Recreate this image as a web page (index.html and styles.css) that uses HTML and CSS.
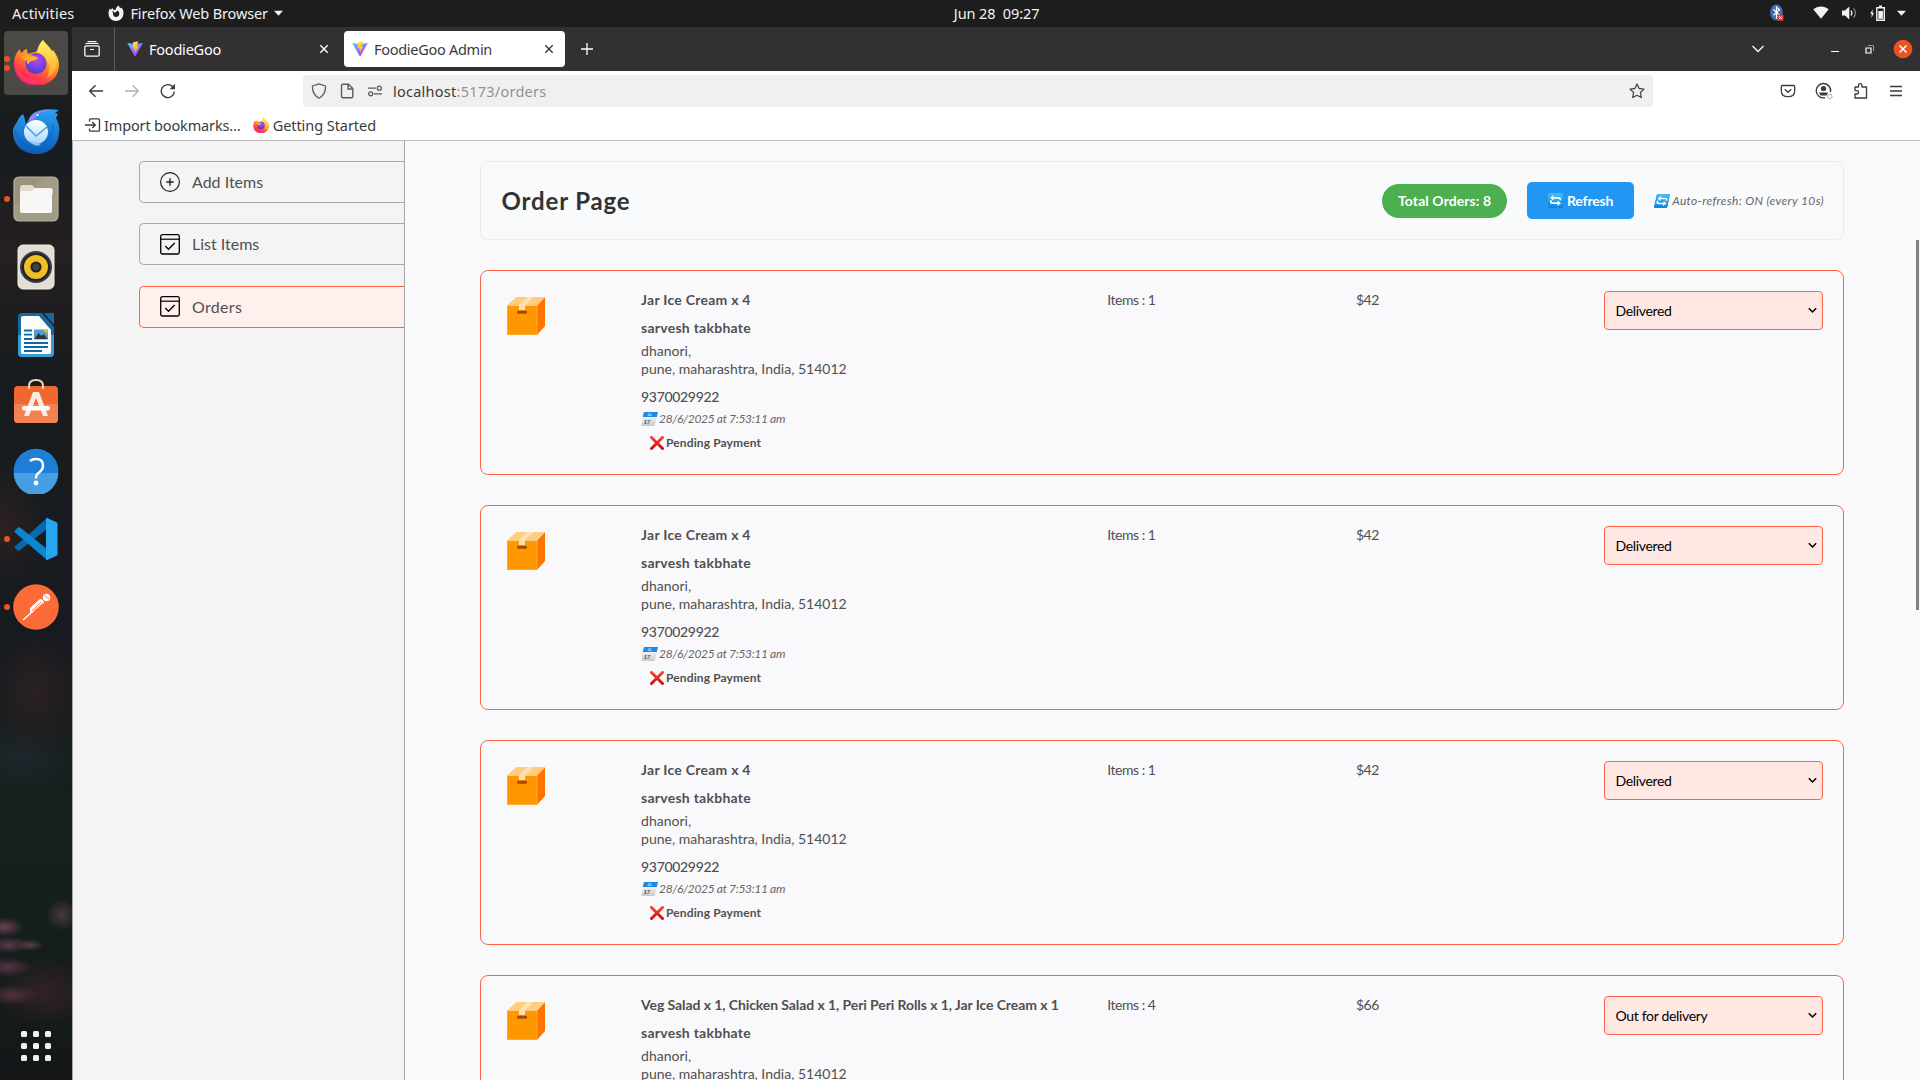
FILE: index.html
```html
<!DOCTYPE html>
<html lang="en">
<head>
<meta charset="utf-8">
<title>FoodieGoo Admin</title>
<link rel="stylesheet" href="styles.css">
</head>
<body>
<svg class="defs" aria-hidden="true">
  <defs>
    <linearGradient id="ffBody" x1="0.8" y1="0" x2="0.3" y2="1"><stop offset="0" stop-color="#fff04a"/><stop offset=".3" stop-color="#ffbd2e"/><stop offset=".55" stop-color="#ff7a2a"/><stop offset=".8" stop-color="#ff3350"/><stop offset="1" stop-color="#e3128a"/></linearGradient>
    <linearGradient id="ffEar" x1="0" y1="0" x2="0" y2="1"><stop offset="0" stop-color="#fff36a"/><stop offset="1" stop-color="#ffa32a"/></linearGradient>
    <radialGradient id="ffGlobe" cx=".55" cy=".35" r=".7"><stop offset="0" stop-color="#b14be8"/><stop offset=".6" stop-color="#7340e0"/><stop offset="1" stop-color="#4b3cc4"/></radialGradient>
    <linearGradient id="ffFace" x1="0" y1="0" x2="1" y2="1"><stop offset="0" stop-color="#ff9a1e"/><stop offset="1" stop-color="#ffbe38"/></linearGradient>
    <linearGradient id="viteBody" x1="0" y1="0" x2=".6" y2="1"><stop offset="0" stop-color="#41d1ff"/><stop offset="1" stop-color="#bd34fe"/></linearGradient>
    <linearGradient id="viteBolt" x1=".4" y1="0" x2=".6" y2="1"><stop offset="0" stop-color="#ffdf4f"/><stop offset="1" stop-color="#ffa800"/></linearGradient>
    <linearGradient id="tb" x1="0" y1="0" x2="0" y2="1"><stop offset="0" stop-color="#2aa0f4"/><stop offset="1" stop-color="#0b5bb5"/></linearGradient>
    <linearGradient id="tbMail" x1="0" y1="0" x2="0" y2="1"><stop offset="0" stop-color="#fff"/><stop offset="1" stop-color="#a8d6fb"/></linearGradient>
    <linearGradient id="syncBg" x1="0" y1="0" x2="0" y2="1"><stop offset="0" stop-color="#43bdf8"/><stop offset="1" stop-color="#0b86dd"/></linearGradient>
    <linearGradient id="calPage" x1="0" y1="0" x2="0" y2="1"><stop offset="0" stop-color="#f6f6f6"/><stop offset="1" stop-color="#c9c9c9"/></linearGradient>
    <linearGradient id="crossRed" x1="0" y1="0" x2="0" y2="1"><stop offset="0" stop-color="#f2423a"/><stop offset="1" stop-color="#cf1111"/></linearGradient>
  </defs>
  <symbol id="firefox" viewBox="0 0 46 46">
    <path fill="url(#ffBody)" d="M1 25C1 19 3 14 6 11l.4-1 2 4c1.500-1.400 3-3 5-4.300L15 15c3-1 5-2 8-2l3-4c1-3 2-6 4-8 2 3 5 5 7 8l2 3 1-1c4 5 6 10 6 15 0 12-10 21-23 21S1 38 1 25z"/>
    <path fill="url(#ffEar)" d="M24 13c1-6 3-9 6-12 1 4 5 6 7 9l2 4 1-2c3 6 4 10 3 15-1 6-5 11-10 13 4-6 4-12 2-17-2-4-6-8-11-10z"/>
    <circle cx="23" cy="24.500" r="10.500" fill="url(#ffGlobe)"/>
    <path fill="url(#ffFace)" d="M7 18c3-2 7-2 10-2 3 0 5 2 8 2-1 3-3 3.500-6 4-2 .4-3 1.500-3.500 3.500-1.500-1-2-2.500-1.500-4-3-.5-5-1.500-7-3.500z"/>
    <path fill="#ff4a4c" opacity=".55" d="M2 22c3 9 7 16 16 18 8 2 15 0 20-5-4 7-9 10-16 10C10 45 2 37 2 22z"/>
  </symbol>
  <symbol id="vite" viewBox="0 0 32 32">
    <path fill="url(#viteBody)" d="M31 5 16.800 30.500a.8.8 0 0 1-1.400 0L1 5a.8.8 0 0 1 .9-1.200L16 6.300 30 3.800A.8.800 0 0 1 31 5z"/>
    <path fill="url(#viteBolt)" d="m22.500.5-10.500 2-.7 11.500 3.500-.6-1 5 3-.9-1.500 7.500 7.500-14-3.200.6z"/>
  </symbol>
  <symbol id="x" viewBox="0 0 16 16"><path d="m4.300 4.300 7.400 7.400m0-7.400-7.400 7.400" fill="none" stroke="currentColor" stroke-width="1.400"/></symbol>
  <symbol id="check-box" viewBox="0 0 20 21">
    <rect x=".7" y=".7" width="18.600" height="19.300" rx="1.700" fill="none" stroke="#000" stroke-width="1.300"/>
    <path d="M.7 5.200h18.600" stroke="#000" stroke-width="1.200"/><path d="m5.300 12 3.200 3.300L14.700 9" fill="none" stroke="#000" stroke-width="1.300"/>
  </symbol>
  <symbol id="parcel" viewBox="0 0 38 38">
    <path fill="#ff9800" d="M0 8.500h30V38H0z"/><path fill="#ff7300" d="M30 8.500 38 0v29l-8 9z"/>
    <path fill="#ffcc80" d="M0 8.500 9.500 0H38l-8 8.500z"/><path fill="#ffe0b2" d="M12 8.500 20 0h6.500L18 8.500V13h-6z"/>
    <rect x="10" y="13.700" width="10" height="3" rx="1.200" fill="#a84a05"/><path d="M.4 8.500V37.600h29.600V8.500" fill="none" stroke="#ffb142" stroke-width=".8"/>
  </symbol>
  <symbol id="cross" viewBox="0 0 14 14"><path d="m1.500 1.500 11 11m0-11-11 11" stroke="url(#crossRed)" stroke-width="2.900" stroke-linecap="square" fill="none"/></symbol>
  <symbol id="sync" viewBox="0 0 15 15">
    <rect width="15" height="15" rx="1.500" fill="url(#syncBg)"/>
    <path d="M12.200 7.300V6.300Q12.200 4.800 10.700 4.800H4.500M2.800 7.300v1.400q0 1.500 1.500 1.500h6.200" fill="none" stroke="#fff" stroke-width="1.700"/><path d="M5.500 2v5.400L2.200 4.700zM9.500 7.600V13l3.500-2.700z" fill="#fff"/>
  </symbol>
</svg>

<header class="topbar">
  <span class="activities">Activities</span>
  <svg class="app-glyph" viewBox="0 0 16 16"><path fill="#f2f2f2" fill-rule="evenodd" d="M.5 8.500C.5 6 1.300 4.500 2 3.500l.8 1.200L4.500 3l.7 1.800L7.500 5C8 3 9 1.300 10.500.3c.3 1.500 1.300 2 2.300 3l.8-.5C15 4.500 15.700 6.500 15.500 8.500 15.300 13 12 16 8 16S.5 13 .5 8.500zM6 6.500 3.800 6.300C5 7 5 8 5 9c.3 2 1.500 3 3 3 2 0 3.300-1.500 3.300-3.300C11.300 7 10.500 6 9 5.500 8.600 7 7.500 7.500 6.500 8z"/></svg>
  <span class="app-name">Firefox Web Browser</span>
  <svg class="caret" viewBox="0 0 10 6"><path d="M0 .5h10L5 6z" fill="#f2f2f2"/></svg>
  <time class="clock">Jun 28&nbsp; 09:27</time>
  <div class="tray">
    <svg width="16" height="18" viewBox="0 0 16 18"><ellipse cx="6.500" cy="8.500" rx="6.300" ry="8" fill="#3d6fb0"/><path d="m3.500 5.500 6 5.500-3 2.800V3l3 2.700-6 5.500" fill="none" stroke="#fff" stroke-width="1.200"/><rect x="7.300" y="10.500" width="6.300" height="6.300" rx="1" fill="#e0323c"/><path d="m9 12.200 2.900 2.900m0-2.900L9 15.100" stroke="#fff"/></svg>
    <svg class="wifi" width="16" height="13" viewBox="0 0 16 13"><path d="M.3 3.300C4.500-.6 11.500-.6 15.700 3.300L8 12.800z" fill="#f2f2f2"/></svg>
    <svg class="vol" width="15" height="14" viewBox="0 0 15 14"><path d="M0 4.500h3L7.300.5v13L3 9.500H0z" fill="#f2f2f2"/><path d="M9 4.500c1 1.500 1 3.500 0 5" fill="none" stroke="#f2f2f2" stroke-width="1.300"/><path d="M11.500 2.300c2.200 2.800 2.200 6.600 0 9.400" fill="none" stroke="#8a8a8a" stroke-width="1.200"/></svg>
    <svg class="bat" width="16" height="16" viewBox="0 0 16 16"><path d="M2.800 4 .3 8.800h1.500L1.300 13 4 7.700H2.300z" fill="#f2f2f2"/><path d="M6.800 2.700h7.500v12.500H6.800zM9 1.300h3" fill="none" stroke="#f2f2f2" stroke-width="1.400"/><path d="M8.300 6h4.600v7.800H8.300z" fill="#f2f2f2"/></svg>
    <svg class="caret" viewBox="0 0 10 6"><path d="M0 .5h10L5 6z" fill="#f2f2f2"/></svg>
  </div>
</header>

<div class="desktop">
  <nav class="dock">
    <div class="app app-active"><i class="dots"><b></b><b></b></i><svg class="icon-ff" width="46" height="46"><use href="#firefox"/></svg></div>
    <div class="app"><svg class="icon-tb" width="48" height="48" viewBox="0 0 48 48">
      <path fill="url(#tb)" d="M1 24c0-5 2-7 4-10 1-3 3-6 6-8 2 4 2 7 3 10l4-7c4-7 15-9 29-7l-4 3 3 1-2 4c3 5 4 10 3 16-1 12-10 20-22 20C11 46 1 37 1 24z"/>
      <path fill="#8f86e8" d="M17 11c3-7 12-9 21-9-7 2-12 3-14 7l-5 7z"/><circle cx="25.500" cy="7" r="1" fill="#fff"/>
      <circle cx="24" cy="24" r="12" fill="url(#tbMail)"/><path d="m14 18 10 10 11-9" fill="none" stroke="#4b9fe6" stroke-width="1.600"/><path d="M17 33c3 4 7 5 12 5-1-1-2-2-2-3" fill="#8ac6f8"/>
      <path d="M3 23c3 9 8 15 18 16 10 0 20-7 20-22" fill="none" stroke="#0c62c4" stroke-width="2" opacity=".5"/></svg></div>
    <div class="app"><i class="dots"><b></b></i><svg width="46" height="46" viewBox="0 0 46 46"><rect x="1" y="1" width="44" height="44" rx="5" fill="#9a927d" stroke="#b9b3a1" stroke-width="1.200"/><path d="M2 30 30 2h10q4 0 4 4v34q0 4-4 4H6q-4 0-4-4z" fill="#a8a18c" opacity=".6"/><path d="M7 12q0-3 3-3h9l3 3h15q3 0 3 3v3H7z" fill="#dedbd0"/><path d="M7 17q0-2 2-2h10l3-2.700h15q2 0 2 2V35q0 2-2 2H9q-2 0-2-2z" fill="#f8f7f5"/></svg></div>
    <div class="app"><svg width="38" height="46" viewBox="0 0 38 46"><rect x="1" y="1" width="36" height="44" rx="5" fill="#e2ded3" stroke="#f0ede6"/><circle cx="19" cy="23" r="16" fill="#3a3a48"/><circle cx="19" cy="23" r="14" fill="#20212e"/><circle cx="19" cy="23" r="12" fill="#f0c020"/><circle cx="19" cy="23" r="5.600" fill="#26211c"/><circle cx="19" cy="23" r="3.500" fill="#414141"/></svg></div>
    <div class="app"><svg width="38" height="46" viewBox="0 0 38 46"><path fill="#15699f" d="M5 1h20l12 14v26q0 4-4 4H5q-4 0-4-4V5q0-4 4-4z"/><path fill="#3b9cd1" d="M1 23h36v18q0 4-4 4H5q-4 0-4-4z"/><path fill="#15699f" d="M27 1h10v12z"/><path fill="#fbfbfb" d="M6 4h16l12 14v22q0 2-2 2H6q-2 0-2-2V6q0-2 2-2z"/><path d="M7 18.500h8M7 22.700h8M7 27h8M7 31h24M7 35h24M7 39h18" stroke="#0e6ca5" stroke-width="1.800"/><rect x="17" y="17.500" width="14" height="10" fill="#4d9fd2"/><path d="m17.500 27 4-6 3 3 2-2 4 5z" fill="#333"/><path d="M26 18h4.500v4z" fill="#f4c12c"/></svg></div>
    <div class="app"><svg class="icon-store" width="46" height="46" viewBox="0 0 46 46"><rect x="1" y="8" width="44" height="37" rx="4" fill="#f0682f"/><path d="M1 26h44v15q0 4-4 4H5q-4 0-4-4z" fill="#f3814f"/><path d="M16 11V8q0-6 7-6t7 6v3" fill="none" stroke="#f5d8ab" stroke-width="2"/><path d="M20 14h6l9 24h-5l-7-18-7 18h-5z" fill="#fdebe3"/><rect x="9" y="28" width="28" height="4.500" rx="2" fill="#fff"/></svg></div>
    <div class="app"><svg width="46" height="46" viewBox="0 0 46 46"><circle cx="23" cy="23" r="22.300" fill="#1f7fd6"/><path d="M.7 25h44.600a22.300 22.300 0 0 1-44.600 0z" fill="#459fe2"/><path d="M17 13q2-2 6-2 7 0 7 6.500 0 4-4 7-3 2-3 6" fill="none" stroke="#fff" stroke-width="2.500"/><circle cx="23" cy="35" r="2.400" fill="#fff"/></svg></div>
    <div class="app"><i class="dots"><b></b></i><svg width="44" height="44" viewBox="0 0 44 44"><path fill="#0868ae" d="M1 31.500q-1-1 0-2L33 1v11L5 34z"/><path fill="#0d86cf" d="M1 13.500q-1 1 0 2L33 43V32L6 10.500q-1-.7-2 0z"/><path fill="#28a5f0" d="M32 .5 42 5q1.500.7 1.500 2v30q0 1.500-1.500 2l-10 4.500z"/></svg></div>
    <div class="app"><i class="dots"><b></b></i><svg width="46" height="46" viewBox="0 0 46 46"><circle cx="23" cy="23" r="22.800" fill="#fb6b37"/><circle cx="33.500" cy="13.500" r="3.700" fill="#fff"/><path d="m17 24 10-9q3 0 4 4L19 29l-8 7q-2 1-1-1l7-6z" fill="#fff"/><path d="m19 27 9-9m-7 9 9-8m1-8 5 4" stroke="#fb6b37" stroke-width=".9"/></svg></div>
    <div class="grid9"><b></b><b></b><b></b><b></b><b></b><b></b><b></b><b></b><b></b></div>
  </nav>

  <section class="browser">
    <div class="tabs">
      <div class="tab-view"><svg width="16" height="16" viewBox="0 0 16 16"><rect x=".8" y="4.800" width="14.400" height="10.400" rx="1.500" fill="none" stroke="#fbfbfe" stroke-width="1.300"/><path d="M1.500 3q.3-.5 1-.5h11q.7 0 1 .5M3.500 .6h9M6 8.500h4" fill="none" stroke="#fbfbfe" stroke-width="1.200"/></svg></div>
      <div class="tab"><svg width="16" height="16"><use href="#vite"/></svg><span class="tab-name">FoodieGoo</span><svg width="16" height="16"><use href="#x"/></svg></div>
      <div class="tab tab-current"><svg width="16" height="16"><use href="#vite"/></svg><span class="tab-name tab-name-long">FoodieGoo Admin</span><svg width="16" height="16"><use href="#x"/></svg></div>
      <svg class="plus" width="14" height="14" viewBox="0 0 14 14"><path d="M7 1v12M1 7h12" stroke="#fbfbfe" stroke-width="1.300"/></svg>
      <div class="win-buttons">
        <svg width="14" height="10" viewBox="0 0 14 10"><path d="m1.500 2 5.500 5.500L12.500 2" fill="none" stroke="#fbfbfe" stroke-width="1.300"/></svg>
        <svg class="min" width="8" height="10" viewBox="0 0 8 10"><path d="M0 7.500h8" stroke="#fff"/></svg>
        <svg class="restore" width="9" height="9" viewBox="0 0 9 9"><path d="M1 3h5v5H1z" fill="none" stroke="#fff" stroke-width="1.200"/><path d="M3 .5h5.500V6" fill="none" stroke="#999"/></svg>
        <svg class="close" width="20" height="20" viewBox="0 0 20 20"><circle cx="10" cy="10" r="9.300" fill="#e95420"/><path d="m6.500 6.500 7 7m0-7-7 7" stroke="#fff" stroke-width="1.500"/></svg>
      </div>
    </div>
    <div class="toolbar">
      <div class="nav-icons">
        <svg width="16" height="16" viewBox="0 0 16 16"><path d="M15 8H1.800M7.500 2.200 1.700 8l5.800 5.800" fill="none" stroke="#3b3a3c" stroke-width="1.400"/></svg>
        <svg width="16" height="16" viewBox="0 0 16 16"><path d="M1 8h13.200M8.500 2.200 14.300 8l-5.800 5.800" fill="none" stroke="#b3b2b4" stroke-width="1.400"/></svg>
        <svg width="16" height="16" viewBox="0 0 16 16"><path d="M14.300 8.500A6.500 6.500 0 1 1 12.700 3.800" fill="none" stroke="#3b3a3c" stroke-width="1.400"/><path d="M15 .8v5.400H9.600z" fill="#3b3a3c"/></svg>
      </div>
      <div class="urlbar">
        <svg width="16" height="16" viewBox="0 0 16 16"><path d="M8 .8 14.500 3q.5 8.500-6.500 12.300Q1 11.500 1.500 3z" fill="none" stroke="#5b5b5e" stroke-width="1.300" stroke-linejoin="round"/></svg>
        <svg width="16" height="16" viewBox="0 0 16 16"><path d="M9.500 1.300H4q-1.500 0-1.500 1.500v10.500q0 1.500 1.500 1.500h8.500q1.300 0 1.300-1.500V5.500zM9 1.500V6h4.500" fill="none" stroke="#5b5b5e" stroke-width="1.400"/></svg>
        <svg width="16" height="16" viewBox="0 0 16 16"><g fill="none" stroke="#5b5b5e" stroke-width="1.300"><circle cx="12.300" cy="5.200" r="2"/><path d="M1 5.200h8M15 10.800H7"/><circle cx="3.700" cy="10.800" r="2"/></g></svg>
        <span class="url">localhost<em>:5173/orders</em></span>
        <svg class="star" width="16" height="16" viewBox="0 0 16 16"><path d="m8 1 2.100 4.500 4.900.6-3.600 3.400.9 5L8 12.200l-4.300 2.300.9-5L1 6.100l4.900-.6z" fill="none" stroke="#4a4a4d" stroke-width="1.300" stroke-linejoin="round"/></svg>
      </div>
      <div class="actions">
        <svg width="16" height="16" viewBox="0 0 16 16"><path d="M2.500 2.500h11q1.200 0 1.200 1.200v4q0 6-6.700 6t-6.700-6v-4q0-1.200 1.200-1.200z" fill="none" stroke="#3b3a3c" stroke-width="1.300"/><path d="m4.700 6.300 3.300 3 3.300-3" fill="none" stroke="#3b3a3c" stroke-width="1.300"/></svg>
        <svg width="18" height="18" viewBox="0 0 18 18"><path d="M10 15.700A7.200 7.200 0 1 1 15.500 10" fill="none" stroke="#3b3a3c" stroke-width="1.400"/><circle cx="8.500" cy="6.500" r="2.600" fill="#3b3a3c"/><path d="M4 10.500h9l-1.500 3h-6z" fill="#3b3a3c"/><circle cx="14.800" cy="14.300" r="2.300" fill="none" stroke="#aaa"/></svg>
        <svg width="16" height="16" viewBox="0 0 16 16"><path d="M2 5.500V4h3.500V2.500q0-1.800 1.700-1.800T9 2.500V4h4.500v11H2v-4h2q1.500 0 1.500-1.700T4 7.600H2z" fill="none" stroke="#3b3a3c" stroke-width="1.300" stroke-linejoin="round"/></svg>
        <svg width="16" height="16" viewBox="0 0 16 16"><path d="M2 3.500h12M2 8h12M2 12.500h12" stroke="#3b3a3c" stroke-width="1.300"/></svg>
      </div>
    </div>
    <div class="bookmarks">
      <svg width="16" height="16" viewBox="0 0 16 16"><path d="M4.500 4.500V2.800q0-1 1-1h8q1 0 1 1v10.400q0 1-1 1h-8q-1 0-1-1v-1.700M0 8h10M7.300 5 10.300 8l-3 3" fill="none" stroke="#3b3a3c" stroke-width="1.300"/></svg>
      <span class="bm-import">Import bookmarks…</span>
      <svg class="bm-ff" width="16" height="16"><use href="#firefox"/></svg>
      <span class="bm-start">Getting Started</span>
    </div>

    <div class="page">
      <aside class="sidebar">
        <div class="option"><svg width="20" height="20" viewBox="0 0 20 20"><circle cx="10" cy="10" r="9.400" fill="none" stroke="#222" stroke-width="1.200"/><path d="M10 6.300v7.400M6.300 10h7.400" stroke="#222" stroke-width="1.400"/></svg><span class="opt-add">Add Items</span></div>
        <div class="option"><svg width="20" height="21"><use href="#check-box"/></svg><span>List Items</span></div>
        <div class="option option-active"><svg width="20" height="21"><use href="#check-box"/></svg><span class="opt-orders">Orders</span></div>
      </aside>
      <main class="orders">
        <div class="orders-head">
          <h1>Order Page</h1>
          <span class="badge">Total Orders: 8</span>
          <button class="refresh"><svg width="15" height="15"><use href="#sync"/></svg>Refresh</button>
          <span class="auto"><svg width="14" height="14"><use href="#sync"/></svg>Auto-refresh: ON (every 10s)</span>
        </div>
        <article class="order">
          <svg class="parcel"><use href="#parcel"/></svg>
          <div>
            <p class="food">Jar Ice Cream x 4</p><p class="name">sarvesh takbhate</p>
            <p class="address">dhanori,<br>pune, maharashtra, India, 514012</p><p class="phone">9370029922</p>
            <p class="date"><svg width="17" height="14" viewBox="0 0 17 14"><path fill="url(#calPage)" d="M2 4h14.200L13.500 14H.2z"/><path fill="#2088e5" d="M3 0h14l-1.200 5H1.700z"/><text x="6.500" y="3.600" class="cal-month">JUL</text><text x="2.500" y="11.800" class="cal-day">17</text></svg>28/6/2025 at 7:53:11 am</p>
            <p class="payment"><svg width="14" height="14"><use href="#cross"/></svg>Pending Payment</p>
          </div>
          <p class="count">Items : 1</p><p class="count">$42</p>
          <div class="status">Delivered<svg width="9" height="7" viewBox="0 0 9 7"><path d="M.8 1.200 4.500 5l3.700-3.800" fill="none" stroke="#000" stroke-width="1.500"/></svg></div>
        </article>
        <article class="order">
          <svg class="parcel"><use href="#parcel"/></svg>
          <div>
            <p class="food">Jar Ice Cream x 4</p><p class="name">sarvesh takbhate</p>
            <p class="address">dhanori,<br>pune, maharashtra, India, 514012</p><p class="phone">9370029922</p>
            <p class="date"><svg width="17" height="14" viewBox="0 0 17 14"><path fill="url(#calPage)" d="M2 4h14.200L13.500 14H.2z"/><path fill="#2088e5" d="M3 0h14l-1.200 5H1.700z"/><text x="6.500" y="3.600" class="cal-month">JUL</text><text x="2.500" y="11.800" class="cal-day">17</text></svg>28/6/2025 at 7:53:11 am</p>
            <p class="payment"><svg width="14" height="14"><use href="#cross"/></svg>Pending Payment</p>
          </div>
          <p class="count">Items : 1</p><p class="count">$42</p>
          <div class="status">Delivered<svg width="9" height="7" viewBox="0 0 9 7"><path d="M.8 1.200 4.500 5l3.700-3.800" fill="none" stroke="#000" stroke-width="1.500"/></svg></div>
        </article>
        <article class="order">
          <svg class="parcel"><use href="#parcel"/></svg>
          <div>
            <p class="food">Jar Ice Cream x 4</p><p class="name">sarvesh takbhate</p>
            <p class="address">dhanori,<br>pune, maharashtra, India, 514012</p><p class="phone">9370029922</p>
            <p class="date"><svg width="17" height="14" viewBox="0 0 17 14"><path fill="url(#calPage)" d="M2 4h14.200L13.500 14H.2z"/><path fill="#2088e5" d="M3 0h14l-1.200 5H1.700z"/><text x="6.500" y="3.600" class="cal-month">JUL</text><text x="2.500" y="11.800" class="cal-day">17</text></svg>28/6/2025 at 7:53:11 am</p>
            <p class="payment"><svg width="14" height="14"><use href="#cross"/></svg>Pending Payment</p>
          </div>
          <p class="count">Items : 1</p><p class="count">$42</p>
          <div class="status">Delivered<svg width="9" height="7" viewBox="0 0 9 7"><path d="M.8 1.200 4.500 5l3.700-3.800" fill="none" stroke="#000" stroke-width="1.500"/></svg></div>
        </article>
        <article class="order">
          <svg class="parcel"><use href="#parcel"/></svg>
          <div>
            <p class="food food-long">Veg Salad x 1, Chicken Salad x 1, Peri Peri Rolls x 1, Jar Ice Cream x 1</p><p class="name">sarvesh takbhate</p>
            <p class="address">dhanori,<br>pune, maharashtra, India, 514012</p>
          </div>
          <p class="count">Items : 4</p><p class="count">$66</p>
          <div class="status">Out for delivery<svg width="9" height="7" viewBox="0 0 9 7"><path d="M.8 1.200 4.500 5l3.700-3.800" fill="none" stroke="#000" stroke-width="1.500"/></svg></div>
        </article>
      </main>
      <div class="scroll-thumb"></div>
    </div>
  </section>
</div>
</body>
</html>
```
FILE: styles.css
```css
* { box-sizing: border-box; }
html { overflow: hidden; }
body { margin: 0; width: 1920px; height: 1080px; overflow: hidden; font: 14.5px/20px "Noto Sans", sans-serif; background: #1d1d1d; }
p, h1 { margin: 0; }
svg { display: block; flex: none; }
.defs { position: absolute; width: 0; height: 0; }

/* system bar */
.topbar { display: grid; grid-template-columns: auto auto auto auto 1fr auto; align-items: center; height: 27px; padding: 0 14px 2px 12px; background: #1d1d1d; color: #f2f2f2; }
.activities { letter-spacing: .2px; }
.app-glyph { width: 16px; height: 16px; margin-left: 34px; }
.app-name { margin-left: 6px; letter-spacing: -.15px; }
.caret { width: 9px; height: 6px; margin-left: 6px; }
.clock { margin-left: 671px; letter-spacing: -.1px; white-space: nowrap; }
.tray { display: flex; align-items: center; }
.wifi { margin-left: 27px; }
.vol { margin-left: 13px; }
.bat { margin-left: 13px; }
.tray .caret { margin-left: 11px; }

.desktop { display: grid; grid-template: 1053px / 72px 1fr; }

/* dock */
.dock { display: flex; flex-direction: column; align-items: center; gap: 4px; padding: 4px 0 19px;
  background:
    radial-gradient(ellipse 20px 10px at 4px 900px, #6a4152 0, transparent 100%),
    radial-gradient(ellipse 22px 9px at 8px 918px, #5a3848 0, transparent 100%),
    radial-gradient(ellipse 14px 6px at 30px 918px, #53404a 0, transparent 100%),
    radial-gradient(ellipse 24px 10px at 8px 940px, #5a3446 0, transparent 100%),
    radial-gradient(ellipse 26px 10px at 12px 968px, #54323f 0, transparent 100%),
    radial-gradient(ellipse 16px 16px at 62px 888px, #4a3842 0, transparent 100%),
    radial-gradient(ellipse 50px 34px at 45px 965px, #332129 0, transparent 100%),
    radial-gradient(ellipse 50px 60px at 35px 665px, #2b2022 0, transparent 100%),
    radial-gradient(ellipse 40px 60px at 5px 500px, #2c2022 0, transparent 100%),
    radial-gradient(ellipse 60px 40px at 20px 730px, #1d262c 0, transparent 100%),
    linear-gradient(#201f1c 0, #171c20 12%, #251f20 21%, #191c1e 32%, #171b20 60%, #17201b 75%, #14201d 82%, #151719 100%); }
.app { position: relative; display: grid; flex: none; place-items: center; width: 64px; height: 64px; border-radius: 4px; }
.app-active { background: #4a4946; }
.icon-ff { margin-bottom: 3px; }
.icon-tb { margin-top: 2px; }
.icon-store { margin-bottom: 4px; }
.dots { position: absolute; left: 0; top: 0; height: 64px; display: flex; flex-direction: column; justify-content: center; gap: 3px; }
.dots b { width: 6px; height: 6px; border-radius: 50%; background: #e95420; }
.grid9 { display: grid; grid-template-columns: repeat(3, 6px); gap: 6px; margin-top: auto; }
.grid9 b { height: 6px; border-radius: 1.500px; background: #f2f2ef; }

/* browser window */
.browser { display: flex; flex-direction: column; min-width: 0; min-height: 0; background: #fff; color: #3b3a3c; }
.tabs { display: flex; flex: none; align-items: center; height: 44px; background: #323031; color: #fbfbfe; }
.tab-view { display: grid; place-items: center; width: 43px; height: 44px; padding-right: 2px; border-right: 1px solid #5d5c5e; }
.tab { display: flex; align-items: center; width: 221px; height: 36px; padding: 0 8px; margin-left: 4px; }
.tab-current { background: #fff; color: #3b3a3c; border-radius: 4px; }
.tab-name { flex: 1; margin-left: 6px; letter-spacing: -.22px; }
.tab-name-long { letter-spacing: -.28px; }
.plus { margin-left: 15px; }
.win-buttons { display: flex; align-items: center; margin-left: auto; padding-right: 7px; }
.min { margin-left: 66px; }
.restore { margin-left: 26px; }
.close { margin-left: 19px; }

.toolbar { display: flex; flex: none; align-items: center; height: 40px; padding: 0 16px; }
.nav-icons { display: flex; gap: 20px; }
.urlbar { display: flex; align-items: center; gap: 12px; width: 1350px; height: 32px; margin-left: 127px; padding: 0 8px; border-radius: 4px; background: #f1f0f1; }
.url { margin-left: -2px; letter-spacing: .25px; }
.url em { font-style: normal; color: #939294; }
.star { margin-left: auto; }
.actions { display: flex; align-items: center; gap: 19.500px; margin-left: auto; }

.bookmarks { display: flex; flex: none; align-items: center; height: 29px; padding: 0 0 2px 13px; }
.bm-import { margin-left: 3px; letter-spacing: -.15px; }
.bm-ff { margin-left: 12px; }
.bm-start { margin-left: 4px; letter-spacing: -.06px; }

/* admin page */
.page { position: relative; display: grid; grid-template-columns: 332px 1fr; flex: 1; min-height: 0; overflow: hidden; border-top: 1px solid #bcbbbd; border-left: 1px solid #a9a9a9; background: #f9f9fb; font-family: Lato, sans-serif; color: #505050; }
.sidebar { display: flex; flex-direction: column; align-items: flex-end; gap: 20.400px; padding-top: 20px; border-right: 1px solid #a9a9a9; background: #f4f4f4; }
.option { display: flex; align-items: center; gap: 12px; width: 265px; height: 42px; padding-left: 20px; border: 1px solid #a9a9a9; border-right: 0; border-radius: 5px 0 0 5px; font-size: 16px; }
.option-active { background: #fff0ed; border-color: tomato; }
.opt-add { letter-spacing: 0; }
.opt-orders { letter-spacing: .32px; }

.orders { padding: 20px 76px 0 75px; }
.orders-head { display: flex; align-items: center; height: 79px; margin-bottom: 30px; padding: 0 19px 0 20.500px; border: 1px solid #e9ecef; border-radius: 8px; background: #f9fafc; }
.orders-head h1 { margin-right: auto; font-size: 24px; font-weight: 700; line-height: 30px; letter-spacing: .85px; color: #333; }
.badge { width: 125px; height: 34px; border-radius: 17px; background: #4caf50; color: #fff; font-size: 14px; font-weight: 700; line-height: 34px; text-align: center; letter-spacing: .08px; }
.refresh { display: flex; align-items: center; justify-content: center; gap: 4px; width: 107px; height: 37px; margin-left: 20px; border: 0; border-radius: 5px; background: #2196f3; color: #fff; font: 700 14px/18px Lato, sans-serif; letter-spacing: -.16px; }
.auto { display: flex; align-items: center; gap: 3px; margin-left: 21px; font-size: 12px; font-style: italic; color: #666; letter-spacing: .34px; white-space: nowrap; }
.auto svg { transform: skewX(-12deg); }

.order { display: grid; grid-template-columns: .5fr 2fr 1fr 1fr 1fr; gap: 30px; align-items: start; height: 205px; margin-bottom: 30px; padding: 20px; border: 1px solid tomato; border-radius: 8px; font-size: 14px; line-height: 18px; }
.order > div:not(.status) { padding-left: .8px; }
.parcel { width: 38px; height: 38px; margin: 6px; }
.food, .name { font-weight: 700; letter-spacing: .25px; white-space: nowrap; }
.food-long { letter-spacing: -.09px; }
.name { margin-top: 10px; }
.address { margin-top: 5px; }
.phone { margin-top: 10px; font-weight: 500; letter-spacing: -.32px; }
.date { display: flex; align-items: center; gap: 1px; height: 16px; margin-top: 5px; font-size: 12px; font-style: italic; letter-spacing: -.32px; color: #666; }
.payment { display: flex; align-items: center; gap: 2px; height: 18px; margin-top: 7px; padding-left: 9px; font-size: 12px; font-weight: 700; letter-spacing: .12px; }
.count { letter-spacing: -.48px; }
.status { display: flex; align-items: center; justify-content: space-between; height: 39px; padding: 0 5px 0 10px; border: 1px solid tomato; border-radius: 4px; background: #ffe8e4; color: #000; letter-spacing: -.32px; }
.cal-month { font: 700 2.800px Lato, sans-serif; fill: #cfe6fb; }
.cal-day { font: italic 700 6px Lato, sans-serif; fill: #444; }
.scroll-thumb { position: absolute; right: 1px; top: 99px; width: 3px; height: 370px; background: #808080; }
```
